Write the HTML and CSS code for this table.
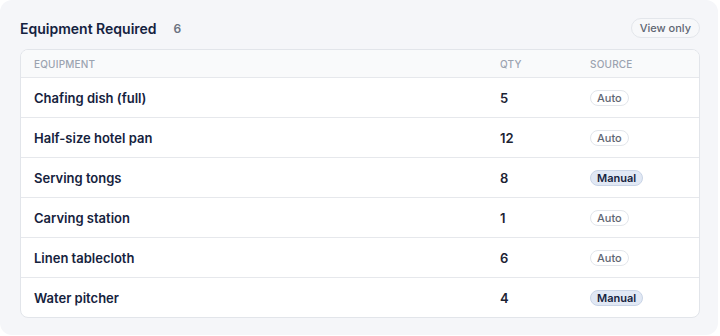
FILE: index.html
```html
<!DOCTYPE html>
<html>
<head>
<meta charset="utf-8">
<link rel="stylesheet" href="styles.css">
</head>
<body>
<div class="panel">
  <div class="panel-head">
    <div class="title-group">
      <h2 class="title">Equipment Required</h2>
      <span class="count">6</span>
    </div>
    <span class="view-pill">View only</span>
  </div>
  <div class="table">
    <div class="row head-row">
      <div>Equipment</div>
      <div>Qty</div>
      <div>Source</div>
    </div>
    <div class="row">
      <div class="name">Chafing dish (full)</div>
      <div class="qty">5</div>
      <div class="src"><span class="badge auto">Auto</span></div>
    </div>
    <div class="row">
      <div class="name">Half-size hotel pan</div>
      <div class="qty">12</div>
      <div class="src"><span class="badge auto">Auto</span></div>
    </div>
    <div class="row">
      <div class="name">Serving tongs</div>
      <div class="qty">8</div>
      <div class="src"><span class="badge manual">Manual</span></div>
    </div>
    <div class="row">
      <div class="name">Carving station</div>
      <div class="qty">1</div>
      <div class="src"><span class="badge auto">Auto</span></div>
    </div>
    <div class="row">
      <div class="name">Linen tablecloth</div>
      <div class="qty">6</div>
      <div class="src"><span class="badge auto">Auto</span></div>
    </div>
    <div class="row">
      <div class="name">Water pitcher</div>
      <div class="qty">4</div>
      <div class="src"><span class="badge manual">Manual</span></div>
    </div>
  </div>
</div>
</body>
</html>
```

FILE: styles.css
```css
* { box-sizing: border-box; }
html, body { margin: 0; padding: 0; background: #ffffff; }
body { font-family: Inter, "Noto Sans", sans-serif; }

.panel {
  width: 718px;
  height: 335px;
  background: #f5f6f9;
  border-radius: 12px;
  padding: 18px 18px 18px 20px;
}

.panel-head {
  height: 20px;
  margin-bottom: 11px;
  display: flex;
  align-items: center;
  justify-content: space-between;
}

.title-group { display: flex; align-items: center; gap: 17px; }

.title {
  margin: 0;
  font-size: 14px;
  font-weight: 600;
  color: #14223f;
}

.count {
  font-size: 12px;
  font-weight: 600;
  color: #6b7280;
}

.view-pill {
  height: 20px;
  padding: 0 8px;
  display: flex;
  align-items: center;
  border: 1px solid #e3e6eb;
  border-radius: 10px;
  font-size: 11px;
  font-weight: 500;
  color: #5f6673;
  background: #f7f8fa;
}

.table {
  background: #ffffff;
  border: 1px solid #e2e5ea;
  border-radius: 8px;
  overflow: hidden;
}

.row {
  display: grid;
  grid-template-columns: 466px 90px 1fr;
  align-items: center;
  height: 40px;
  padding: 0 13px;
  border-top: 1px solid #e6e8ec;
}

.head-row {
  height: 27px;
  border-top: none;
  background: #f9fafb;
  font-size: 10px;
  font-weight: 500;
  text-transform: uppercase;
  letter-spacing: 0.2px;
  color: #9ba3b0;
}

.name {
  font-size: 13px;
  font-weight: 600;
  color: #15223d;
}

.qty {
  font-size: 13px;
  font-weight: 600;
  color: #1c2333;
}

.src { display: flex; align-items: center; }

.badge {
  display: inline-flex;
  align-items: center;
  height: 16px;
  padding: 0 6px;
  border-radius: 8px;
  font-size: 11px;
  font-weight: 500;
}

.badge.auto {
  border: 1px solid #e3e6eb;
  color: #5f6673;
  background: #ffffff;
}

.badge.manual {
  border: 1px solid #c9d4e6;
  background: #e1e8f4;
  color: #15223d;
  font-weight: 600;
}
```
